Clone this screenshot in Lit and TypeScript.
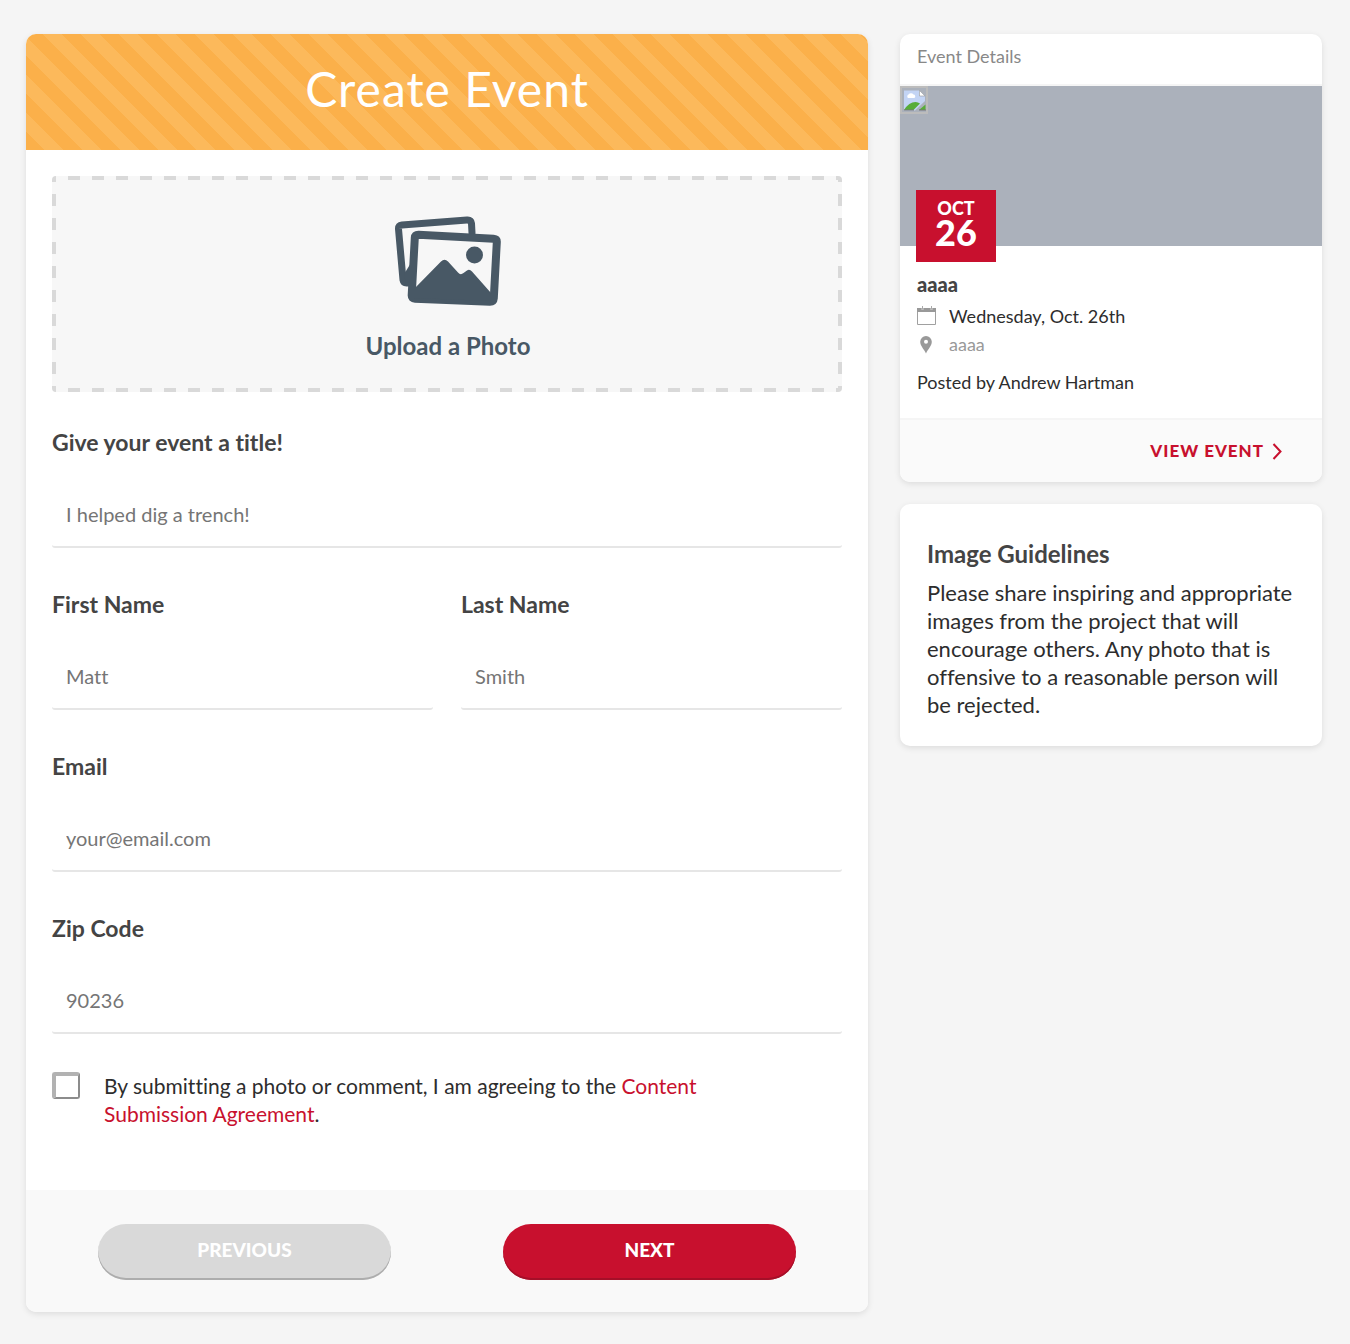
import { LitElement, html, css } from "lit";
import { customElement } from "lit/decorators.js";

@customElement("app-root")
export class AppRoot extends LitElement {
  static styles = css`
    :host {
      display: block;
      min-height: 100vh;
      box-sizing: border-box;
      padding: 34px 28px 32px 26px;
      background: #f5f5f5;
      color: #2d2d2d;
      font-family: Lato, "Liberation Sans", sans-serif;
      font-size: 20px;
      line-height: 28px;
      font-variant-ligatures: none;
    }
    *,
    *::before,
    *::after {
      box-sizing: border-box;
    }
    h1, h2, h3, p {
      margin: 0;
    }
    a {
      color: #c8102e;
      text-decoration: none;
    }
    .page {
      display: grid;
      grid-template-columns: 421fr 211fr;
      gap: 32px;
      align-items: start;
    }
    .card {
      background: #fff;
      border-radius: 10px;
      box-shadow: 0 2px 6px rgba(0, 0, 0, 0.1);
      overflow: hidden;
    }
    .banner {
      display: flex;
      align-items: center;
      justify-content: center;
      height: 116px;
      padding-bottom: 6px;
      background: linear-gradient(45deg, #fbb04a 25%, #fcb95b 25% 50%, #fbb04a 50% 75%, #fcb95b 75%)
        left bottom / 38px 38px;
    }
    .banner h1 {
      color: #fff;
      font-size: 48px;
      font-weight: 400;
      line-height: 56px;
      letter-spacing: 1px;
    }
    .body {
      display: grid;
      grid-template-columns: 1fr 1fr;
      column-gap: 28px;
      padding: 26px 26px 62px;
    }
    .wide {
      grid-column: 1 / -1;
    }
    .upload {
      --dash-x: linear-gradient(90deg, #d9d9d9 50%, transparent 50%);
      --dash-y: linear-gradient(#d9d9d9 50%, transparent 50%);
      display: flex;
      flex-direction: column;
      align-items: center;
      gap: 24px;
      height: 216px;
      padding: 40px 0 0 2px;
      border: 0;
      border-radius: 4px;
      background:
        var(--dash-x) 16px top / 24px 4px repeat-x,
        var(--dash-x) 16px bottom / 24px 4px repeat-x,
        var(--dash-y) left 18px / 4px 24px repeat-y,
        var(--dash-y) right 18px / 4px 24px repeat-y,
        #f7f7f7;
      color: #485865;
      font: inherit;
      font-size: 24px;
      font-weight: 700;
      cursor: pointer;
    }
    .field {
      display: flex;
      flex-direction: column;
      height: 162px;
      padding-top: 42px;
    }
    .upload + .field {
      height: 156px;
      padding-top: 36px;
    }
    .field label {
      color: #444;
      font-size: 23px;
      font-weight: 700;
      line-height: 28px;
    }
    .field input {
      width: 100%;
      height: 66px;
      margin-top: 26px;
      padding: 0 14px;
      border: 0;
      border-bottom: 2px solid #e6e6e6;
      border-radius: 3px;
      background: transparent;
      color: #444;
      font: inherit;
    }
    .field input::placeholder {
      color: #757575;
      opacity: 1;
    }
    .agree {
      display: flex;
      gap: 24px;
      padding: 38px 80px 0 0;
      font-size: 21px;
    }
    .agree input {
      appearance: none;
      flex: none;
      width: 28px;
      height: 27px;
      margin: 0;
      border: 2px solid #8c8c8c;
      border-top: 4px solid #b2b2b2;
      border-left: 4px solid #b2b2b2;
      border-radius: 3px;
      background: #fff;
    }
    .agree input:checked {
      background: #c8102e;
    }
    .actions {
      display: grid;
      grid-template-columns: 1fr 1fr;
      gap: 112px;
      padding: 34px 72px 32px;
      background: #f9f9f9;
    }
    .pill {
      height: 56px;
      padding: 0 0 4px;
      border: 0;
      border-radius: 28px;
      background: #c8102e;
      box-shadow: inset 0 -2px #a50f28;
      color: #fff;
      font: inherit;
      font-size: 19px;
      font-weight: 900;
      text-transform: uppercase;
    }
    .pill.muted {
      background: #d9d9d9;
      box-shadow: inset 0 -2px #adadad;
    }
    .side {
      display: grid;
      gap: 22px;
    }
    .side-title {
      height: 52px;
      padding: 8px 17px;
      border-bottom: 2px solid #f5f5f5;
      color: #888;
      font-size: 18px;
      font-weight: 400;
      line-height: 28px;
    }
    .photo {
      position: relative;
      height: 160px;
      background: #abb1bb;
    }
    .missing {
      display: block;
    }
    .date {
      position: absolute;
      left: 16px;
      bottom: -16px;
      width: 80px;
      height: 72px;
      padding-top: 8px;
      background: #c8102e;
      color: #fff;
      text-align: center;
      font-weight: 900;
    }
    .month {
      display: block;
      font-size: 18px;
      line-height: 20px;
    }
    .day {
      display: block;
      font-size: 36px;
      line-height: 28px;
    }
    .info {
      padding: 24px 17px 22px;
      font-size: 18px;
    }
    .info h3 {
      color: #444;
      font-size: 20px;
      font-weight: 900;
      line-height: 28px;
    }
    .row {
      display: flex;
      align-items: center;
      gap: 12px;
      line-height: 28px;
    }
    .row.first {
      margin-top: 4px;
    }
    .row svg {
      flex: none;
    }
    .quiet {
      color: #999;
    }
    .posted {
      margin-top: 10px;
    }
    .more {
      display: flex;
      justify-content: flex-end;
      height: 64px;
      padding: 0 40px 0 0;
      border-top: 2px solid #f5f5f5;
      background: #fafafa;
    }
    .more a {
      display: flex;
      align-items: center;
      gap: 8px;
      font-size: 17px;
      font-weight: 900;
      letter-spacing: 1px;
    }
    .guide {
      padding: 36px 27px 27px;
      font-size: 22px;
    }
    .guide h2 {
      margin-bottom: 11px;
      color: #444;
      font-size: 24px;
      font-weight: 700;
      line-height: 28px;
    }
  `;

  private field(id: string, label: string, placeholder: string, wide = true, type = "text") {
    return html`
      <div class="field ${wide ? "wide" : ""}">
        <label for=${id}>${label}</label>
        <input id=${id} type=${type} placeholder=${placeholder} />
      </div>
    `;
  }

  render() {
    return html`
      <div class="page">
        <form class="card" @submit=${(e: Event) => e.preventDefault()}>
          <header class="banner"><h1>Create Event</h1></header>
          <div class="body">
            <button class="upload wide" type="button">
              <svg width="108" height="92" viewBox="0 0 108 92" aria-hidden="true">
                <g fill="none" stroke="#485865" stroke-linejoin="round" stroke-linecap="round">
                  <path d="M15 67 L12.5 67 Q9.500 67 9 64 L4.500 13 Q4.300 9.500 8 9 L73 4 Q77 3.700 77.500 7.500 L78 17" stroke-width="7" />
                  <path d="M24.500 19 L99.500 23 Q103 23.300 102.800 26.500 L99.800 82.500 Q99.500 86 96 86 L21 83 Q17.500 82.800 17.700 79.500 L20.800 22 Q21 19 24.500 19 Z" stroke-width="8" transform="translate(0 -0.300)" />
                </g>
                <path fill="#485865" d="M10 58 L17 47 L17 68 L12 68 Z" />
                <circle cx="80.500" cy="39" r="8.500" fill="#485865" />
                <path fill="#485865" d="M20 73 L47 45.500 Q50.500 41.800 54 45.500 L64 56.500 Q66.500 59.500 69.500 57 L73 54.500 Q75.500 52.700 78 55.500 L97 77 L97 85 L20 82 Z" />
              </svg>
              <span>Upload a Photo</span>
            </button>
            ${this.field("title", "Give your event a title!", "I helped dig a trench!")}
            ${this.field("first", "First Name", "Matt", false)}
            ${this.field("last", "Last Name", "Smith", false)}
            ${this.field("email", "Email", "your@email.com", true, "email")}
            ${this.field("zip", "Zip Code", "90236")}
            <div class="agree wide">
              <input id="agree" type="checkbox" />
              <label for="agree"
                >By submitting a photo or comment, I am agreeing to the
                <a href="#agreement">Content Submission Agreement</a>.</label
              >
            </div>
          </div>
          <footer class="actions">
            <button class="pill muted" type="button">Previous</button>
            <button class="pill" type="submit">Next</button>
          </footer>
        </form>

        <aside class="side">
          <article class="card">
            <h2 class="side-title">Event Details</h2>
            <div class="photo">
              <svg class="missing" width="28" height="28" viewBox="0 0 28 28" aria-hidden="true">
                <rect x="1" y="1" width="26" height="26" fill="none" stroke="#bcbcbc" stroke-width="2" />
                <path d="M4 4.500 H19.500 L25 10 V15 L15 24.500 H4 Z" fill="#c3d4f4" />
                <path d="M19.500 4.500 V10 H25 Z" fill="#fff" stroke="#999" stroke-width=".6" />
                <path d="M8 12 a2 2 0 0 1 .5-3.400 a3 3 0 0 1 5 0 a1.800 1.800 0 0 1 .8 3.400 Z" fill="#fff" />
                <path d="M4 24 Q9 16 15.500 16 Q18 16 20 17.500 L13.500 24 Z" fill="#57ad38" />
                <path d="M25.500 18.500 V24 H19 Z" fill="#57ad38" />
                <path d="M4 24 H14 M19 24 H26" stroke="#777" />
              </svg>
              <time class="date" datetime="10-26">
                <span class="month">OCT</span>
                <span class="day">26</span>
              </time>
            </div>
            <div class="info">
              <h3>aaaa</h3>
              <div class="row first">
                <svg width="20" height="20" viewBox="0 0 20 20" aria-hidden="true">
                  <path d="M.5 3 H18.500 V18.500 H.5 Z" fill="#fff" stroke="#a0a0a0" />
                  <path d="M0 2 H4.500 V4 H6.500 V2 H13.500 V4 H15.500 V2 H19 V6 H0 Z" fill="#999" />
                  <path d="M5.500 0 V3.500 M14.500 0 V3.500" stroke="#aaa" />
                </svg>
                <span>Wednesday, Oct. 26th</span>
              </div>
              <div class="row quiet">
                <svg width="20" height="20" viewBox="0 0 20 20" aria-hidden="true">
                  <path fill="#999" fill-rule="evenodd" d="M9 2 A5.800 5.800 0 0 1 14.800 7.800 C14.800 12 11 15 9 19.500 C7 15 3.200 12 3.200 7.800 A5.800 5.800 0 0 1 9 2 Z M9 5.700 a2 2 0 1 0 0 4 a2 2 0 1 0 0-4 Z" />
                </svg>
                <span>aaaa</span>
              </div>
              <p class="posted">Posted by Andrew Hartman</p>
            </div>
            <div class="more">
              <a href="#event">
                VIEW EVENT
                <svg width="10" height="18" viewBox="0 0 10 18" aria-hidden="true">
                  <path d="M1.500 2 L8.500 9.500 L1.500 17" fill="none" stroke="#c8102e" stroke-width="2" />
                </svg>
              </a>
            </div>
          </article>
          <section class="card guide">
            <h2>Image Guidelines</h2>
            <p>
              Please share inspiring and appropriate images from the project that will encourage
              others. Any photo that is offensive to a reasonable person will be rejected.
            </p>
          </section>
        </aside>
      </div>
    `;
  }
}
